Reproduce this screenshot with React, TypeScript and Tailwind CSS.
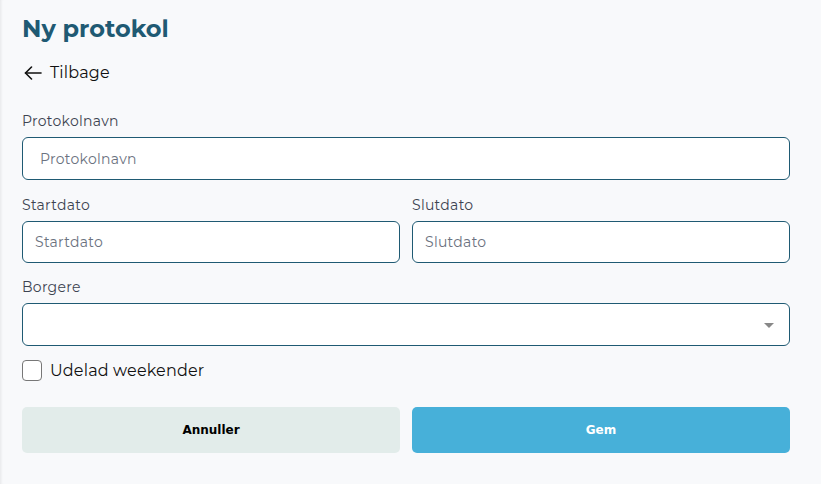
import React from 'react';

const ArrowLeft: React.FC = () => (
    <svg width="18" height="14" viewBox="0 0 18 14" fill="none" stroke="currentColor" strokeWidth={1.6} strokeLinecap="round" strokeLinejoin="round">
        <path d="M17 7H1.5" />
        <path d="M7.5 1L1.5 7l6 6" />
    </svg>
);

const Label: React.FC<{ children: React.ReactNode }> = ({ children }) => (
    <label className="block text-[14px] text-[#3d4451] mb-[7px] leading-[18px] tracking-[0.02em]">{children}</label>
);

const inputCls =
    'w-full rounded-[6px] border border-[#1f5a73] bg-white text-[14px] text-[#111] tracking-[0.02em] placeholder:text-[#6b7280] outline-none';

const App: React.FC = () => {
    return (
        <div className="min-h-[484px] w-full bg-[#f8f9fb] shadow-[inset_3px_0_3px_-2px_rgba(0,0,0,0.08)]" style={{ fontFamily: 'Montserrat, Inter, "Noto Sans", sans-serif' }}>
            <div className="w-[768px] ml-[22px] pt-[14px]">
                <h1 className="text-[24px] font-bold text-[#1f5a73] leading-[30px]">Ny protokol</h1>

                <a href="#" className="flex items-center gap-[8px] mt-[15px] pl-[2px] text-[16px] text-[#111] leading-[28px] tracking-[0.01em]">
                    <ArrowLeft />
                    <span>Tilbage</span>
                </a>

                <div className="mt-[25px]">
                    <Label>Protokolnavn</Label>
                    <input className={`${inputCls} h-[43px] px-[17px]`} placeholder="Protokolnavn" />
                </div>

                <div className="grid grid-cols-2 gap-[12px] mt-[16px]">
                    <div>
                        <Label>Startdato</Label>
                        <input className={`${inputCls} h-[42px] px-[12px]`} placeholder="Startdato" />
                    </div>
                    <div>
                        <Label>Slutdato</Label>
                        <input className={`${inputCls} h-[42px] px-[12px]`} placeholder="Slutdato" />
                    </div>
                </div>

                <div className="mt-[15px]">
                    <Label>Borgere</Label>
                    <div className="relative">
                        <div className={`${inputCls} h-[43px]`} />
                        <span className="absolute right-[16px] top-[20px] w-0 h-0 border-l-[5px] border-r-[5px] border-t-[5px] border-l-transparent border-r-transparent border-t-[#888]" />
                    </div>
                </div>

                <label className="flex items-center gap-[8px] mt-[14px] h-[21px] text-[16px] text-[#111] tracking-[0.01em]">
                    <span className="w-[20px] h-[21px] rounded-[4px] border border-[#777] bg-white" />
                    <span>Udelad weekender</span>
                </label>

                <div className="grid grid-cols-2 gap-[12px] mt-[26px]">
                    <button className="h-[46px] rounded-[5px] bg-[#e2ecea] text-[12px] font-bold text-black" style={{ fontFamily: '"DejaVu Sans", sans-serif' }}>
                        Annuller
                    </button>
                    <button className="h-[46px] rounded-[5px] bg-[#47b0d9] text-[12px] font-bold text-white" style={{ fontFamily: '"DejaVu Sans", sans-serif' }}>
                        Gem
                    </button>
                </div>
            </div>
        </div>
    );
};

export default App;
